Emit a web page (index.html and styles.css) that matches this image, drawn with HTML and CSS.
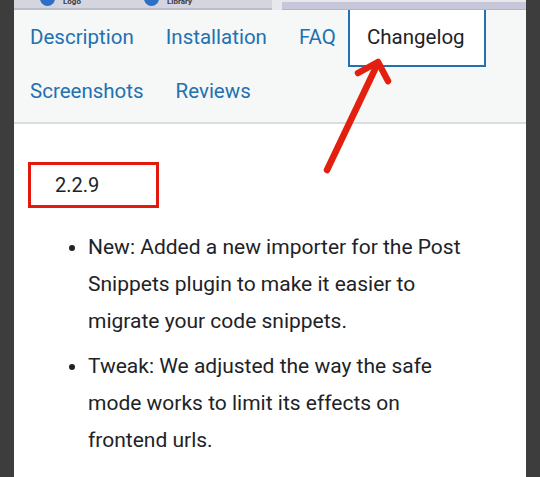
FILE: index.html
```html
<!DOCTYPE html>
<html>
<head>
<meta charset="utf-8">
<link rel="stylesheet" href="styles.css">
</head>
<body>
<div class="frame">
  <div class="topstrip">
    <div class="strip-left">
      <div class="strip-item"><span class="dot"></span><span class="tiny">Logo</span></div>
      <div class="strip-item"><span class="dot"></span><span class="tiny">Library</span></div>
    </div>
    <div class="strip-gap"></div>
    <div class="strip-right"><span class="footer-tag">&lt;footer&gt;</span></div>
  </div>
  <nav class="tabs">
    <a class="tab">Description</a>
    <a class="tab">Installation</a>
    <a class="tab">FAQ</a>
    <a class="tab active">Changelog</a>
    <a class="tab">Screenshots</a>
    <a class="tab">Reviews</a>
  </nav>
  <main class="content">
    <h4 class="version">2.2.9</h4>
    <ul class="changes">
      <li>New: Added a new importer for the Post Snippets plugin to make it easier to migrate your code snippets.</li>
      <li>Tweak: We adjusted the way the safe mode works to limit its effects on frontend urls.</li>
    </ul>
  </main>
</div>
<svg class="arrow" width="540" height="477" viewBox="0 0 540 477">
  <line x1="327" y1="170" x2="377" y2="65" stroke="#e3200f" stroke-width="6.5" stroke-linecap="round"/>
  <polyline points="358,73 378,62 388,81" fill="none" stroke="#e3200f" stroke-width="6.5" stroke-linecap="round" stroke-linejoin="round"/>
</svg>
</body>
</html>
```
FILE: styles.css
```css
html, body {
  margin: 0;
  padding: 0;
}
body {
  background: #3d3d3d;
  width: 540px;
  height: 477px;
  overflow: hidden;
  position: relative;
  font-family: Roboto, "Liberation Sans", sans-serif;
}
.frame {
  margin: 0 14px;
  height: 477px;
  background: #ffffff;
  display: flex;
  flex-direction: column;
}
.topstrip {
  height: 10px;
  display: flex;
  overflow: hidden;
  background: #e8e8ec;
}
.strip-left {
  width: 258px;
  background: #d4d5de;
  border-bottom: 2px solid #bcbdc8;
  box-sizing: border-box;
  display: flex;
  padding-left: 26px;
  gap: 60px;
}
.strip-item {
  display: flex;
  align-items: flex-start;
  gap: 8px;
  width: 44px;
}
.dot {
  width: 15px;
  height: 15px;
  border-radius: 50%;
  background: #2b6fc7;
  margin-top: -9px;
  flex: none;
}
.tiny {
  font-size: 8px;
  line-height: 8px;
  font-weight: 700;
  color: #3a3a44;
  margin-top: -2px;
}
.strip-gap {
  width: 10px;
}
.strip-right {
  flex: 1;
  margin-top: 2px;
  background: #c6c7d8;
  border-bottom: 1px solid #b4b5c6;
  text-align: center;
  overflow: hidden;
}
.footer-tag {
  display: inline-block;
  font-size: 8px;
  line-height: 8px;
  color: #555766;
  margin-top: 1px;
}
.tabs {
  background: #f6f7f7;
  display: flex;
  flex-wrap: wrap;
  align-items: flex-start;
  padding: 0 0 4px 0;
  border-bottom: 2px solid #dcdcde;
}
.tab {
  display: block;
  padding: 15px 16px 15px;
  font-size: 20.5px;
  line-height: 24px;
  color: #2271b1;
}
.tab.active {
  background: #ffffff;
  color: #1d2327;
  border: 2px solid #2271b1;
  border-top: none;
  padding: 15px 19px 16px 17px;
  margin-bottom: -5px;
  margin-left: -4px;
  position: relative;
}
.content {
  flex: 1;
  padding: 38px 14px 0;
}
.version {
  margin: 0;
  width: 131px;
  height: 46px;
  box-sizing: border-box;
  border: 3px solid #e3190c;
  padding-left: 24px;
  display: flex;
  align-items: center;
  font-size: 20px;
  font-weight: 400;
  color: #1d2327;
}
.changes {
  margin: 21px 37px 0 0;
  padding-left: 60px;
  font-size: 21px;
  line-height: 37px;
  color: #1d2327;
}
.changes li {
  margin-bottom: 8px;
}
.arrow {
  position: absolute;
  left: 0;
  top: 0;
  pointer-events: none;
}
```
